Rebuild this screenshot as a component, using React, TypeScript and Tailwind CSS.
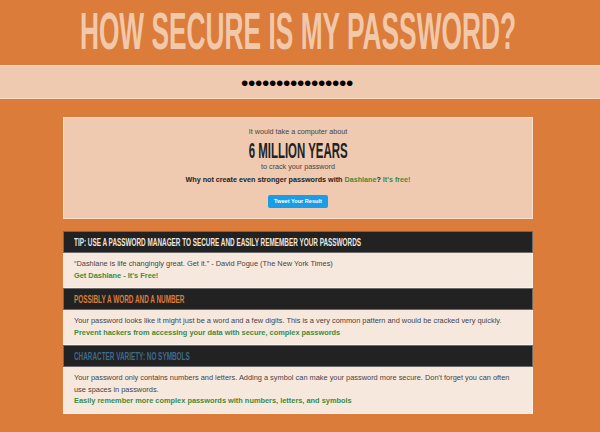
import React from "react";

const sections = [
  {
    title: "TIP: USE A PASSWORD MANAGER TO SECURE AND EASILY REMEMBER YOUR PASSWORDS",
    color: "text-[#efe7df]",
    body: "\u201CDashlane is life changingly great. Get it.\u201D - David Pogue (The New York Times)",
    link: "Get Dashlane - It's Free!",
  },
  {
    title: "POSSIBLY A WORD AND A NUMBER",
    color: "text-[#db7c3b]",
    body: "Your password looks like it might just be a word and a few digits. This is a very common pattern and would be cracked very quickly.",
    link: "Prevent hackers from accessing your data with secure, complex passwords",
  },
  {
    title: "CHARACTER VARIETY: NO SYMBOLS",
    color: "text-[#3f6b8c]",
    body: "Your password only contains numbers and letters. Adding a symbol can make your password more secure. Don't forget you can often use spaces in passwords.",
    link: "Easily remember more complex passwords with numbers, letters, and symbols",
  },
];

export default function App() {
  return (
    <div className="w-[600px] h-[432px] overflow-hidden bg-[#db7c3b] font-['Liberation_Sans',Arial,sans-serif]">
      <header className="h-[65px] pt-[5px] pr-[5px] overflow-hidden flex justify-center">
        <h1 className="shrink-0 whitespace-nowrap text-[52px] leading-[52px] font-bold text-[#f1c9aa] scale-x-[0.506]">
          HOW SECURE IS MY PASSWORD?
        </h1>
      </header>

      <div className="h-[34px] bg-[#f0cab0] border-y border-[#f7dcc8] flex items-center justify-center pr-[6px]">
        <span className="text-[21px] leading-none tracking-[-0.35px] text-black">
          ••••••••••••••••
        </span>
      </div>

      <div className="ml-[63px] mt-[18px] w-[470px] h-[102px] bg-[#f0cab0] border border-[#f8e1d0] flex flex-col items-center pt-[9px] text-[#444]">
        <p className="text-[7.2px] leading-[10px]">It would take a computer about</p>
        <p className="mt-[3px] h-[22px] whitespace-nowrap text-[22px] leading-[22px] font-bold text-[#222] scale-x-[0.52]">
          6 MILLION YEARS
        </p>
        <p className="text-[7.2px] leading-[10px]">to crack your password</p>
        <p className="mt-[3px] text-[7.2px] leading-[10px] font-bold text-[#222]">
          Why not create even stronger passwords with{" "}
          <span className="text-[#3e8b3e]">Dashlane</span>?{" "}
          <span className="text-[#3e8b3e]">It's free!</span>
        </p>
        <button className="mt-[10px] w-[60px] h-[13px] rounded-[2px] bg-[#1a9de6] text-white text-[5.6px] font-bold leading-none">
          Tweet Your Result
        </button>
      </div>

      <div className="ml-[63px] mt-[12px] w-[470px]">
        {sections.map((s) => (
          <section key={s.title}>
            <div className="h-[22px] bg-[#222] border border-[#6a6a6a] flex items-center pl-[10px] overflow-hidden">
              <span
                className={`shrink-0 whitespace-nowrap origin-left scale-x-[0.58] text-[11px] leading-none font-bold ${s.color}`}
              >
                {s.title}
              </span>
            </div>
            <div className="bg-[#f7e8de] border-x border-b border-[#fbf2ec] px-[10px] pt-[5px] pb-[6px] text-[7.4px] leading-[11.5px] text-[#444]">
              <p>{s.body}</p>
              <p className="font-bold text-[#3e8b3e]">{s.link}</p>
            </div>
          </section>
        ))}
      </div>
    </div>
  );
}
